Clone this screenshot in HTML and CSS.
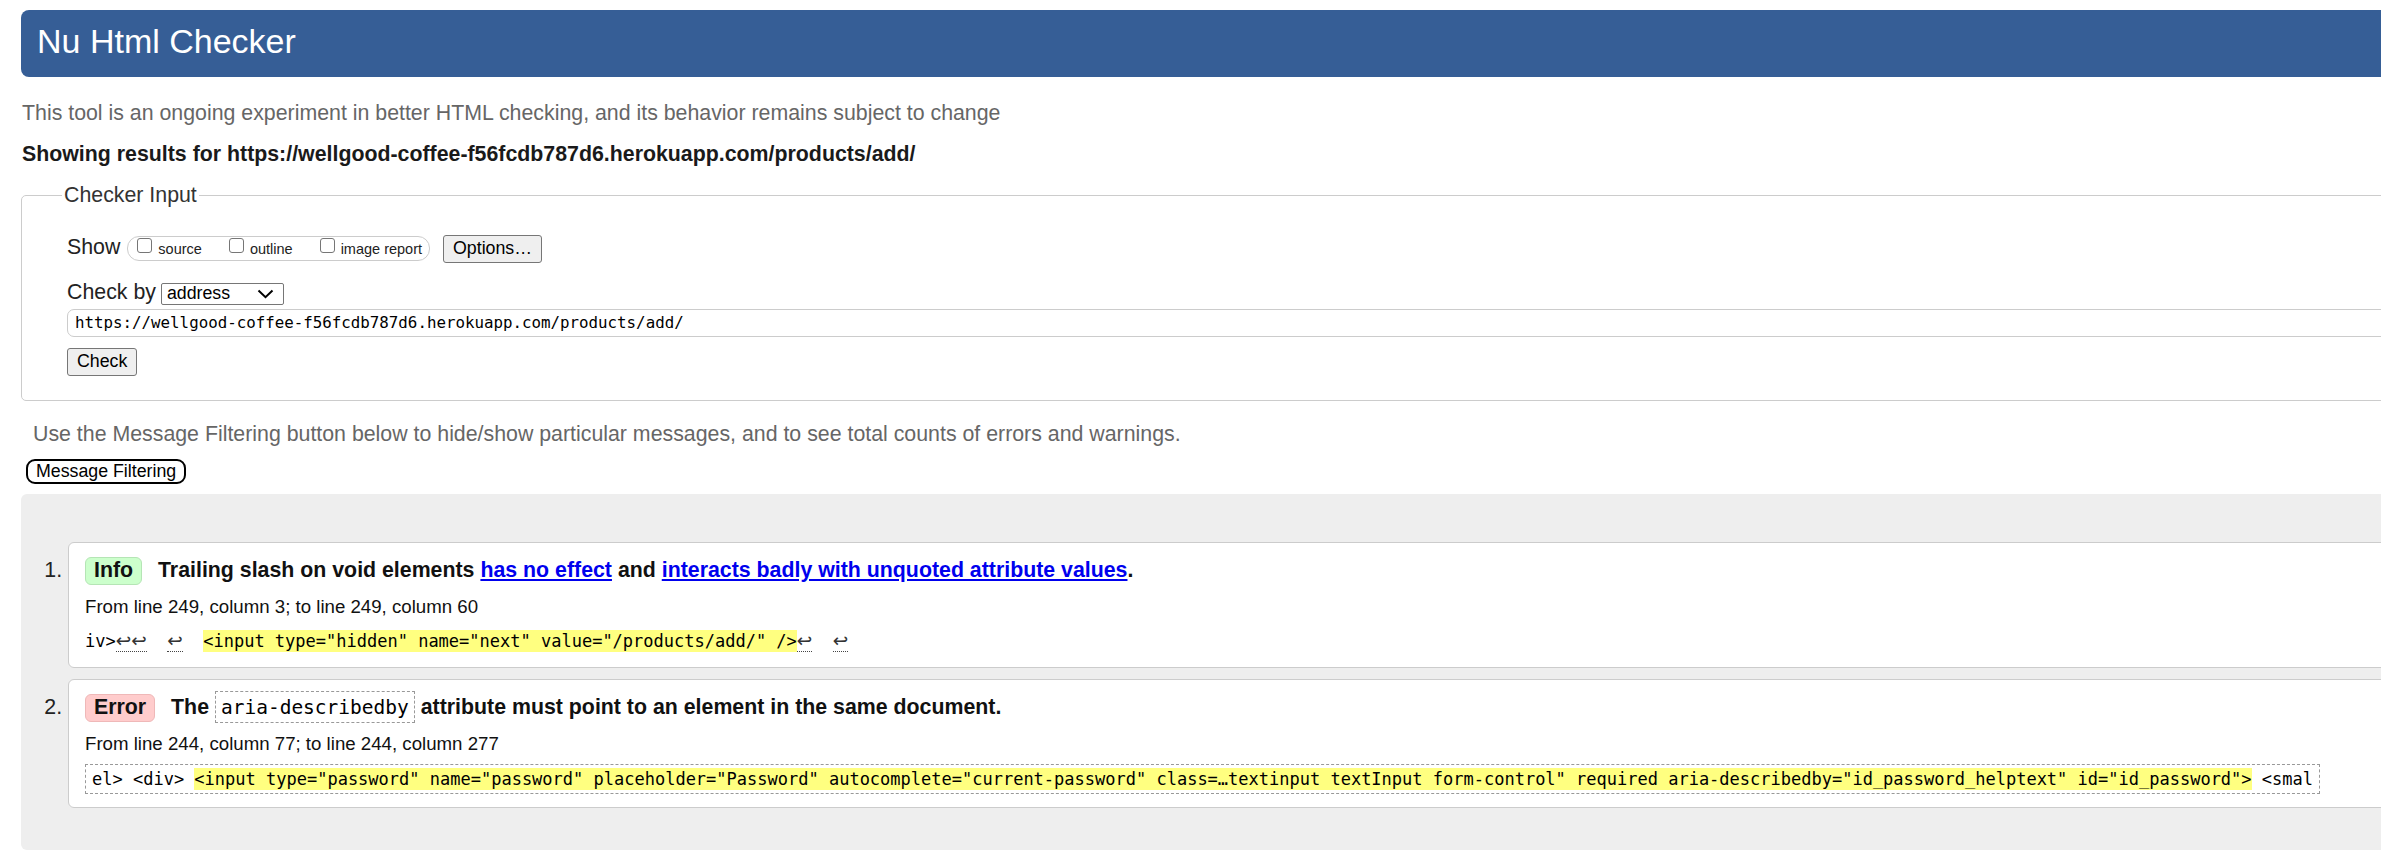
FILE: index.html
```html
<!DOCTYPE html>
<html lang="en">
<head>
<meta charset="utf-8">
<title>Showing results for https://wellgood-coffee-f56fcdb787d6.herokuapp.com/products/add/ - Nu Html Checker</title>
<link rel="stylesheet" href="styles.css">
</head>
<body>
<div class="page">
  <h1 class="hdr">Nu Html Checker</h1>
  <p class="intro">This tool is an ongoing experiment in better HTML checking, and its behavior remains subject to change</p>
  <p class="showing">Showing results for https://wellgood-coffee-f56fcdb787d6.herokuapp.com/products/add/</p>

  <fieldset class="checker">
    <legend class="legend">Checker Input</legend>
    <div class="row">
      <span class="lbl">Show</span>
      <span class="opts"><label class="opt"><input type="checkbox" class="cb">source</label><label class="opt opt-next"><input type="checkbox" class="cb">outline</label><label class="opt opt-next"><input type="checkbox" class="cb">image report</label></span>
      <button type="button" class="btn btn-options">Options…</button>
    </div>
    <div class="row row-by">
      <span class="lbl">Check by</span>
      <span class="select"><span class="select-text">address</span><svg class="chev" width="17" height="10" viewBox="0 0 17 10"><polyline points="1.5,1.5 8.5,8.2 15.5,1.5" fill="none" stroke="#000" stroke-width="2"/></svg></span>
    </div>
    <input class="url" type="url" value="https://wellgood-coffee-f56fcdb787d6.herokuapp.com/products/add/">
    <button type="button" class="btn btn-check">Check</button>
  </fieldset>

  <p class="filter-note">Use the Message Filtering button below to hide/show particular messages, and to see total counts of errors and warnings.</p>
  <button type="button" class="filter-btn">Message Filtering</button>

  <div class="results">
    <ol class="msgs">
      <li class="msg">
        <p class="title"><span class="badge badge-info">Info</span> Trailing slash on void elements <a href="#" class="lnk">has no effect</a> and <a href="#" class="lnk">interacts badly with unquoted attribute values</a>.</p>
        <p class="loc">From line 249, column 3; to line 249, column 60</p>
        <div class="extract">iv&gt;<span class="lf">↩↩</span>  <span class="lf">↩</span>  <mark class="hl">&lt;input type="hidden" name="next" value="/products/add/" /&gt;</mark><span class="lf">↩</span>  <span class="lf">↩</span></div>
      </li>
      <li class="msg">
        <p class="title"><span class="badge badge-error">Error</span> The <code class="icode">aria-describedby</code> attribute must point to an element in the same document.</p>
        <p class="loc">From line 244, column 77; to line 244, column 277</p>
        <div class="extract extract-box">el&gt; &lt;div&gt; <mark class="hl">&lt;input type="password" name="password" placeholder="Password" autocomplete="current-password" class=…textinput textInput form-control" required aria-describedby="id_password_helptext" id="id_password"&gt;</mark> &lt;smal</div>
      </li>
    </ol>
  </div>
</div>
</body>
</html>
```

FILE: styles.css
```css
html {
  overflow: hidden;
  background: #fff;
}

body {
  margin: 0;
  padding: 0;
  font-family: "Liberation Sans", Arial, sans-serif;
  font-size: 21.33px;
  color: #222;
}

.page {
  width: 2419px;
  padding: 10px 0 0 21px;
}

.hdr {
  margin: 0;
  height: 67px;
  box-sizing: border-box;
  padding: 0 16px 5px;
  line-height: 62px;
  font-size: 34px;
  font-weight: normal;
  color: #fff;
  background: #365e96;
  border-radius: 8px;
}

.intro {
  margin: 24px 0 0 1px;
  color: #666;
}

.showing {
  margin: 16px 0 0 1px;
  font-weight: bold;
  color: #1a1a1a;
}

.checker {
  margin: 16px 0 0 0;
  padding: 27px 0 24px 45px;
  border: 1px solid #ccc;
  border-radius: 5px;
  min-width: 0;
}

.legend {
  padding: 0 2px;
  margin-left: -5px;
  color: #333;
}

.row {
  display: flex;
  align-items: baseline;
}

.row-by {
  margin-top: 16.5px;
}

.lbl {
  color: #222;
}

.opts {
  margin-left: 7px;
  border: 1px solid #ccc;
  border-radius: 12px;
  padding: 1px 7px 3px 9px;
  font-size: 14.5px;
  color: #222;
}

.opt-next {
  margin-left: 27px;
}

.cb {
  -webkit-appearance: none;
  appearance: none;
  display: inline-block;
  width: 15px;
  height: 15px;
  box-sizing: border-box;
  margin: 0 6px 1.5px 0;
  border: 1px solid #767676;
  border-radius: 3px;
  background: #fff;
  vertical-align: baseline;
}

.btn {
  font-family: "Liberation Sans", Arial, sans-serif;
  font-size: 17.78px;
  color: #000;
  background: #efefef;
  border: 1px solid #767676;
  border-radius: 3px;
  padding: 2px 9px 3px;
  line-height: normal;
}

.btn-options {
  margin-left: 13px;
}

.select {
  display: inline-flex;
  align-items: flex-start;
  justify-content: space-between;
  box-sizing: border-box;
  width: 123px;
  height: 22px;
  margin-left: 5px;
  padding: 0 9px 0 5px;
  border: 1px solid #767676;
  border-radius: 2px;
  font-size: 17.78px;
  line-height: 18px;
  color: #000;
  background: #fff;
}

.chev {
  align-self: center;
}

.url {
  display: block;
  box-sizing: border-box;
  width: 100%;
  height: 28px;
  margin: 4px 0 0;
  padding: 0 7px;
  border: 1px solid #ccc;
  border-radius: 7px;
  font-family: "DejaVu Sans Mono", "Liberation Mono", monospace;
  font-size: 15.8px;
  color: #000;
  background: #fff;
}

.btn-check {
  display: block;
  margin-top: 11px;
}

.filter-note {
  margin: 21px 0 0 12px;
  color: #666;
}

.filter-btn {
  display: block;
  margin: 12px 0 0 5px;
  padding: 0 8px;
  border: 2px solid #000;
  border-radius: 9px;
  background: #fff;
  color: #000;
  font-family: "Liberation Sans", Arial, sans-serif;
  font-size: 17.78px;
  line-height: normal;
}

.results {
  margin-top: 10.5px;
  background: #eee;
  border-radius: 6px;
}

.msgs {
  margin: 0;
  padding: 47.5px 0 42px 47px;
  list-style: decimal outside;
}

.msg {
  background: #fff;
  border: 1px solid #ccc;
  border-radius: 6px;
  padding: 14px 16px 12.5px;
}

.msg + .msg {
  margin-top: 11px;
}

.title {
  margin: 0;
  font-weight: bold;
  color: #111;
}

.badge {
  display: inline-block;
  padding: 0 8px 1px;
  margin-right: 10px;
  border: 1px solid;
  border-radius: 6px;
  font-weight: bold;
  color: #111;
}

.badge-info {
  background: #ccffcc;
  border-color: #b5e5b5;
}

.badge-error {
  background: #ffcccc;
  border-color: #efb8b8;
}

.lnk {
  color: #0000ee;
  text-decoration: underline;
}

.icode {
  font-family: "DejaVu Sans Mono", "Liberation Mono", monospace;
  font-size: 19.5px;
  font-weight: normal;
  color: #000;
  border: 1px dashed #999;
  padding: 4px 5px 3px;
}

.loc {
  margin: 11px 0 0;
  font-size: 18.67px;
  color: #111;
}

.extract {
  margin-top: 9px;
  padding: 4px 0;
  font-family: "DejaVu Sans Mono", "Liberation Mono", monospace;
  font-size: 17px;
  line-height: 20px;
  white-space: pre;
  color: #000;
}

.extract-box {
  width: max-content;
  padding: 4px 6px;
  border: 1px dashed #999;
}

.hl {
  background: #ffff80;
  color: #000;
  padding: 1px 0;
}

.lf {
  font-family: "DejaVu Sans", sans-serif;
  font-size: 18.5px;
  color: #333;
  border-bottom: 1px dotted #444;
}
```
